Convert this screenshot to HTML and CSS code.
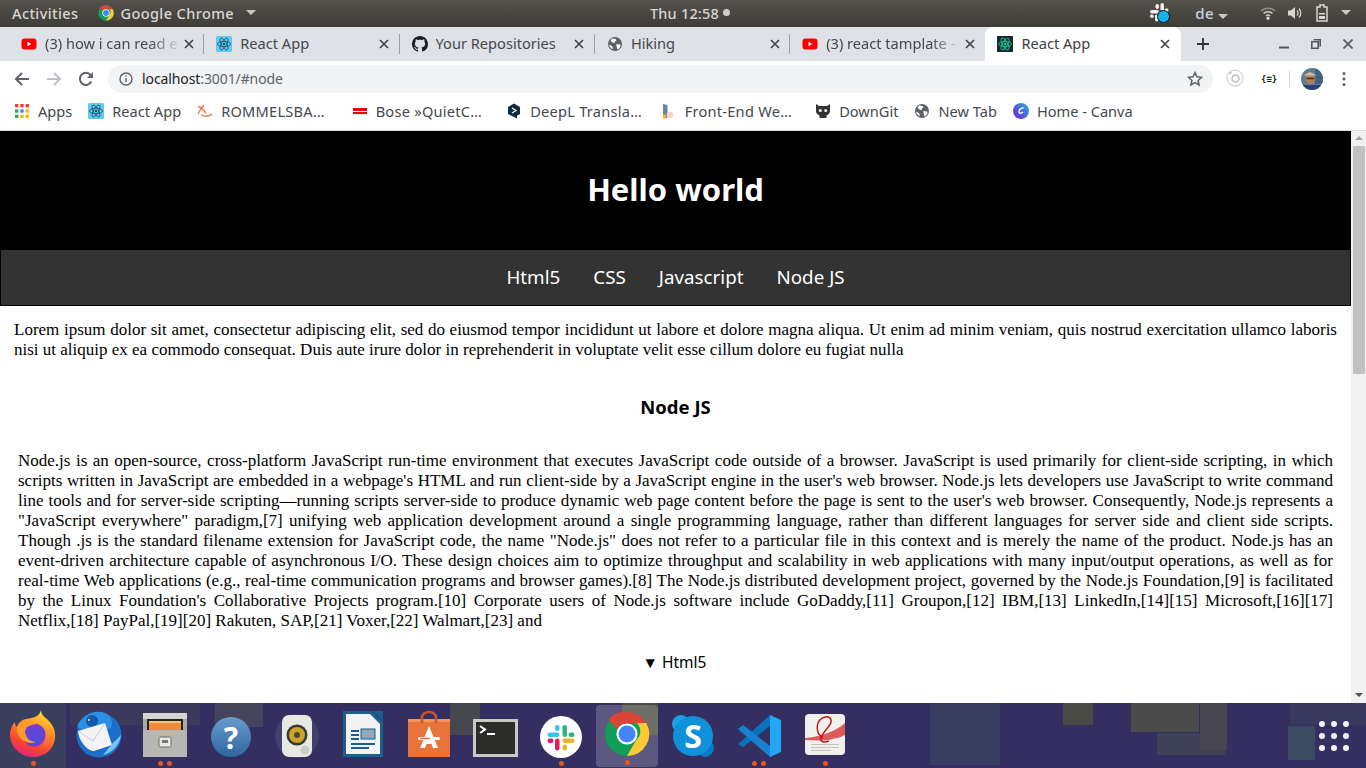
FILE: index.html
```html
<!DOCTYPE html>
<html lang="en">
<head>
<meta charset="utf-8">
<title>React App</title>
<link rel="stylesheet" href="styles.css">
</head>
<body>
<svg class="defs" width="0" height="0" aria-hidden="true">
  <defs>
    <symbol id="yt" viewBox="0 0 16 16"><rect x="0.5" y="2.5" width="15" height="11" rx="3" fill="#f00"/><path d="M6.5 5.8v4.4L10.3 8z" fill="#fff"/></symbol>
    <symbol id="react" viewBox="0 0 16 16"><rect width="16" height="16" rx="1.5" fill="#61c8ee"/><g fill="none" stroke="#1f4e66" stroke-width=".8"><ellipse cx="8" cy="8" rx="6.6" ry="2.6"/><ellipse cx="8" cy="8" rx="6.6" ry="2.6" transform="rotate(60 8 8)"/><ellipse cx="8" cy="8" rx="6.6" ry="2.6" transform="rotate(120 8 8)"/></g><circle cx="8" cy="8" r="1.3" fill="#1f4e66"/></symbol>
    <symbol id="react-dark" viewBox="0 0 16 16"><rect width="16" height="16" fill="#20232a"/><g fill="none" stroke="#10c89a" stroke-width=".9"><ellipse cx="8" cy="8" rx="6.6" ry="2.6"/><ellipse cx="8" cy="8" rx="6.6" ry="2.6" transform="rotate(60 8 8)"/><ellipse cx="8" cy="8" rx="6.6" ry="2.6" transform="rotate(120 8 8)"/></g><circle cx="8" cy="8" r="1.4" fill="#10c89a"/></symbol>
    <symbol id="gh" viewBox="0 0 16 16"><path fill="#1b1f23" d="M8 0C3.58 0 0 3.58 0 8c0 3.54 2.29 6.53 5.47 7.59.4.07.55-.17.55-.38 0-.19-.01-.82-.01-1.49-2.01.37-2.53-.49-2.69-.94-.09-.23-.48-.94-.82-1.13-.28-.15-.68-.52-.01-.53.63-.01 1.08.58 1.23.82.72 1.21 1.87.87 2.33.66.07-.52.28-.87.51-1.07-1.78-.2-3.64-.89-3.64-3.95 0-.87.31-1.59.82-2.15-.08-.2-.36-1.02.08-2.12 0 0 .67-.21 2.2.82.64-.18 1.32-.27 2-.27.68 0 1.36.09 2 .27 1.53-1.04 2.2-.82 2.2-.82.44 1.1.16 1.92.08 2.12.51.56.82 1.27.82 2.15 0 3.07-1.87 3.75-3.65 3.95.29.25.54.73.54 1.48 0 1.07-.01 1.93-.01 2.2 0 .21.15.46.55.38A8.013 8.013 0 0016 8c0-4.42-3.58-8-8-8z"/></symbol>
    <symbol id="globe" viewBox="0 0 16 16"><circle cx="8" cy="8" r="7" fill="#5f6368"/><path fill="#fff" d="M5 2.6l3.6.4.8 1.6-1.6 1-.2 1.6-2-.6L3.600 4.800zM9.400 8l3.600.4.800 1.400-1.800 3-1.600.4-.800-2.600zM2 8.400l3 1.800.800 1.800-.4 1.200A6 6 0 0 1 2 8.400z"/></symbol>
    <symbol id="x" viewBox="0 0 10 10"><path d="M1 1l8 8M9 1l-8 8" fill="none" stroke="#3c4043" stroke-width="1.6"/></symbol>
    <symbol id="chrome" viewBox="0 0 48 48"><circle cx="24" cy="24" r="23" fill="#0f9d58"/><path d="M24 1a23 23 0 0 1 20 11.500H24a11.500 11.500 0 0 0-10.500 7L5 8.500A23 23 0 0 1 24 1z" fill="#db4437"/><path d="M44 12.500A23 23 0 0 1 24 47l10-17.300a11.500 11.500 0 0 0 0-17.200z" fill="#fcc934"/><circle cx="24" cy="24" r="11" fill="#fff"/><circle cx="24" cy="24" r="8.800" fill="#4285f4"/></symbol>
    <symbol id="slack" viewBox="0 0 24 24"><g fill="#36c5f0"><rect x="3" y="9" width="8" height="3" rx="1.500"/><rect x="8" y="4" width="3" height="4" rx="1.500"/></g><g fill="#2eb67d"><rect x="13" y="4" width="3" height="8" rx="1.500"/><rect x="17" y="9" width="4" height="3" rx="1.500"/></g><g fill="#ecb22e"><rect x="13" y="13" width="8" height="3" rx="1.500"/><rect x="13" y="17" width="3" height="4" rx="1.500"/></g><g fill="#e01e5a"><rect x="8" y="13" width="3" height="8" rx="1.500"/><rect x="3" y="13" width="4" height="3" rx="1.500"/></g></symbol>
  </defs>
</svg>

<header class="topbar">
  <div class="top-left">
    <span>Activities</span>
    <span class="app-menu"><svg class="ico16"><use href="#chrome"/></svg>Google Chrome<i class="caret"></i></span>
  </div>
  <div class="clock">Thu 12:58<i class="clock-dot"></i></div>
  <div class="top-right">
    <span class="tray-slack">
      <svg viewBox="0 0 22 22" width="22" height="22"><g fill="#f2f2f2"><rect x="1" y="8" width="9" height="3.400" rx="1.700"/><rect x="6.500" y="2" width="3.400" height="5" rx="1.700"/><rect x="11.500" y="1" width="3.400" height="8" rx="1.700"/><rect x="15.500" y="6.500" width="4" height="3" rx="1.500"/><rect x="6" y="12.500" width="3.400" height="7" rx="1.700"/><rect x="1" y="12.500" width="3.700" height="3.400" rx="1.700"/></g><circle cx="14.500" cy="14.500" r="6" fill="#12b5ea" stroke="#111" stroke-width="1"/></svg>
    </span>
    <span class="tray-lang">de<i class="caret"></i></span>
    <svg class="tray-wifi" viewBox="0 0 16 16" width="16" height="16"><g fill="none" stroke="#c9c8c3" stroke-width="1.500"><path d="M1 6a10 10 0 0 1 14 0" opacity=".55"/><path d="M3.500 8.500a6.500 6.500 0 0 1 9 0"/><path d="M6 11a3 3 0 0 1 4 0"/></g><circle cx="8" cy="13.300" r="1.500" fill="#e6e5e0"/></svg>
    <svg class="tray-vol" viewBox="0 0 16 16" width="16" height="16"><path d="M1 5.500h3L8 2v12L4 10.500H1z" fill="#d8d7d2"/><g fill="none" stroke="#d8d7d2" stroke-width="1.200"><path d="M10 5.500a3.500 3.500 0 0 1 0 5"/><path d="M12 3.500a6.500 6.500 0 0 1 0 9"/></g></svg>
    <svg class="tray-bat" viewBox="0 0 14 18" width="14" height="18"><path d="M5 1h4v2h3v14H2V3h3z" fill="none" stroke="#d8d7d2" stroke-width="1.500"/><path d="M4 9h6v1.500H4zM4 12h6v3H4z" fill="#d8d7d2"/></svg>
    <i class="caret tray-caret"></i>
  </div>
</header>

<nav class="tabstrip">
  <div class="tab"><svg class="ico16"><use href="#yt"/></svg><span class="tab-title fade">(3) how i can read e</span><svg class="tab-x"><use href="#x"/></svg></div>
  <div class="tab"><svg class="ico16"><use href="#react"/></svg><span class="tab-title">React App</span><svg class="tab-x"><use href="#x"/></svg></div>
  <div class="tab"><svg class="ico16"><use href="#gh"/></svg><span class="tab-title">Your Repositories</span><svg class="tab-x"><use href="#x"/></svg></div>
  <div class="tab"><svg class="ico16"><use href="#globe"/></svg><span class="tab-title">Hiking</span><svg class="tab-x"><use href="#x"/></svg></div>
  <div class="tab tab-pre"><svg class="ico16"><use href="#yt"/></svg><span class="tab-title fade">(3) react tamplate -</span><svg class="tab-x"><use href="#x"/></svg></div>
  <div class="tab tab-active"><svg class="ico16"><use href="#react-dark"/></svg><span class="tab-title">React App</span><svg class="tab-x"><use href="#x"/></svg></div>
  <svg class="newtab" viewBox="0 0 12 12" width="12" height="12"><path d="M6 0v12M0 6h12" stroke="#2f3134" stroke-width="1.800"/></svg>
  <div class="winctl">
    <svg viewBox="0 0 10 10" width="10" height="10"><path d="M0 8.500h10" stroke="#55585c" stroke-width="2"/></svg>
    <svg viewBox="0 0 10 10" width="10" height="10"><path d="M2.500.800h6.700v6.700M.800 2.800h6.400v6.400H.800z" fill="none" stroke="#55585c" stroke-width="1.600"/></svg>
    <svg viewBox="0 0 10 10" width="10" height="10"><path d="M.500.500l9 9M9.500.500l-9 9" stroke="#55585c" stroke-width="1.700"/></svg>
  </div>
</nav>

<div class="toolbar">
  <svg class="tool" viewBox="0 0 16 16" width="16" height="16"><path d="M15 8H2M8 2L2 8l6 6" fill="none" stroke="#5f6368" stroke-width="2"/></svg>
  <svg class="tool" viewBox="0 0 16 16" width="16" height="16"><path d="M1 8h13M8 2l6 6-6 6" fill="none" stroke="#bdc1c6" stroke-width="2"/></svg>
  <svg class="tool" viewBox="0 0 16 16" width="16" height="16"><path d="M13.300 10.500A6 6 0 1 1 12.500 4L14 5.500" fill="none" stroke="#5f6368" stroke-width="2"/><path d="M15 1v6H9z" fill="#5f6368"/></svg>
  <div class="omnibox">
    <svg viewBox="0 0 14 14" width="14" height="14"><circle cx="7" cy="7" r="6" fill="none" stroke="#5f6368" stroke-width="1.400"/><path d="M7 6v4.200M7 3.600v1.200" stroke="#5f6368" stroke-width="1.400"/></svg>
    <span class="url"><b>localhost</b>:3001/#node</span>
    <svg class="star" viewBox="0 0 16 16" width="16" height="16"><path d="M8 1.500l1.900 4.300 4.700.5-3.500 3.100 1 4.600L8 11.600l-4.100 2.400 1-4.600L1.400 6.300l4.700-.5z" fill="none" stroke="#5f6368" stroke-width="1.500"/></svg>
  </div>
  <svg class="ext-a" viewBox="0 0 18 18" width="18" height="18"><circle cx="9" cy="9" r="8" fill="none" stroke="#d5d5d5" stroke-width="1.300"/><circle cx="9.500" cy="9.500" r="3.500" fill="none" stroke="#bdbdbd" stroke-width="1.500"/><circle cx="4.500" cy="4" r="1.300" fill="#c9c9c9"/></svg>
  <span class="ext-b">{≡}</span>
  <i class="tool-sep"></i>
  <svg class="avatar" viewBox="0 0 22 22" width="22" height="22"><defs><clipPath id="av"><circle cx="11" cy="11" r="11"/></clipPath></defs><g clip-path="url(#av)"><rect width="22" height="22" fill="#5d7d92"/><rect x="14" width="8" height="16" fill="#40627e"/><rect y="17" width="22" height="5" fill="#2d3f78"/><circle cx="9.500" cy="11" r="5" fill="#b47d58"/><path d="M2 7.500l7-3.500 7 3.500z" fill="#d2bd98"/><path d="M5.500 10.500h8" stroke="#333" stroke-width="1.400"/></g></svg>
  <svg class="menu-dots" viewBox="0 0 4 16" width="4" height="16"><circle cx="2" cy="2.500" r="1.600" fill="#5f6368"/><circle cx="2" cy="8" r="1.600" fill="#5f6368"/><circle cx="2" cy="13.500" r="1.600" fill="#5f6368"/></svg>
</div>

<div class="bookmarks">
  <a class="bm"><svg class="ico14" viewBox="0 0 14 14"><g><rect width="3.400" height="3.400" fill="#ea4335"/><rect x="5.300" width="3.400" height="3.400" fill="#ea4335"/><rect x="10.600" width="3.400" height="3.400" fill="#ea4335"/><rect y="5.300" width="3.400" height="3.400" fill="#34a853"/><rect x="5.300" y="5.300" width="3.400" height="3.400" fill="#4285f4"/><rect x="10.600" y="5.300" width="3.400" height="3.400" fill="#fbbc05"/><rect y="10.600" width="3.400" height="3.400" fill="#34a853"/><rect x="5.300" y="10.600" width="3.400" height="3.400" fill="#fbbc05"/><rect x="10.600" y="10.600" width="3.400" height="3.400" fill="#fbbc05"/></g></svg>Apps</a>
  <a class="bm"><svg class="ico16"><use href="#react"/></svg>React App</a>
  <a class="bm bm-long"><svg class="ico16" viewBox="0 0 16 16"><g fill="none" stroke="#f0743e" stroke-width="1.300"><path d="M1 3.500c3 .5 6 3.500 8 7"/><path d="M1 11c2-4 4-7 6-9"/><path d="M4 12c4 2 9 1 11-1"/></g></svg>ROMMELSBA…</a>
  <a class="bm bm-long"><svg class="ico16" viewBox="0 0 16 16"><rect x="1" y="5" width="14" height="6" fill="#e3000f"/><rect x="1" y="8" width="14" height="1" fill="#fff"/><rect x="1" y="11" width="14" height="2" fill="#eee"/></svg>Bose »QuietC…</a>
  <a class="bm bm-long"><svg class="ico16" viewBox="0 0 16 16"><path d="M8 .500l6 3.500v7l-3 1.800v2.700l-3-1.600-6-2.900V4z" fill="#0f2b46"/><path d="M6 5l4 2.500L6 10" fill="none" stroke="#fff" stroke-width="1.200"/></svg>DeepL Transla…</a>
  <a class="bm bm-long"><svg class="ico16" viewBox="0 0 16 16"><path d="M2 1l4.500 1v13H2z" fill="#6b83a8"/><path d="M2 11l3 1v3.500H2z" fill="#f5b325"/><circle cx="9" cy="12" r="3.300" fill="#fbd3bf"/></svg>Front-End We…</a>
  <a class="bm"><svg class="ico16" viewBox="0 0 16 16"><path d="M1 1l3 2h8l3-2v7c0 2.500-2 4-3.500 4.300V15h-7v-2.700C3 12 1 10.500 1 8z" fill="#333"/><circle cx="5.300" cy="7.500" r="1.500" fill="#fff"/><circle cx="10.700" cy="7.500" r="1.500" fill="#fff"/></svg>DownGit</a>
  <a class="bm"><svg class="ico16"><use href="#globe"/></svg>New Tab</a>
  <a class="bm"><svg class="ico16" viewBox="0 0 16 16"><defs><linearGradient id="cv" x1="0" y1="1" x2="1" y2="0"><stop offset="0" stop-color="#7a16d8"/><stop offset="1" stop-color="#25b5d8"/></linearGradient></defs><circle cx="8" cy="8" r="8" fill="url(#cv)"/><path d="M10.500 5.500C9.500 4 6.500 5.500 6 8.500c-.3 2 2 2.500 4 .5" fill="none" stroke="#fff" stroke-width="1.400"/></svg>Home - Canva</a>
</div>

<div class="viewport">
  <main class="page">
    <header class="hero"><h1>Hello world</h1></header>
    <nav class="site-nav"><a>Html5</a><a>CSS</a><a>Javascript</a><a>Node JS</a></nav>
    <p class="intro">Lorem ipsum dolor sit amet, consectetur adipiscing elit, sed do eiusmod tempor incididunt ut labore et dolore magna aliqua. Ut enim ad minim veniam, quis nostrud exercitation ullamco laboris nisi ut aliquip ex ea commodo consequat. Duis aute irure dolor in reprehenderit in voluptate velit esse cillum dolore eu fugiat nulla</p>
    <section class="article">
      <h2>Node JS</h2>
      <p>Node.js is an open-source, cross-platform JavaScript run-time environment that executes JavaScript code outside of a browser. JavaScript is used primarily for client-side scripting, in which scripts written in JavaScript are embedded in a webpage's HTML and run client-side by a JavaScript engine in the user's web browser. Node.js lets developers use JavaScript to write command line tools and for server-side scripting—running scripts server-side to produce dynamic web page content before the page is sent to the user's web browser. Consequently, Node.js represents a "JavaScript everywhere" paradigm,[7] unifying web application development around a single programming language, rather than different languages for server side and client side scripts. Though .js is the standard filename extension for JavaScript code, the name "Node.js" does not refer to a particular file in this context and is merely the name of the product. Node.js has an event-driven architecture capable of asynchronous I/O. These design choices aim to optimize throughput and scalability in web applications with many input/output operations, as well as for real-time Web applications (e.g., real-time communication programs and browser games).[8] The Node.js distributed development project, governed by the Node.js Foundation,[9] is facilitated by the Linux Foundation's Collaborative Projects program.[10] Corporate users of Node.js software include GoDaddy,[11] Groupon,[12] IBM,[13] LinkedIn,[14][15] Microsoft,[16][17] Netflix,[18] PayPal,[19][20] Rakuten, SAP,[21] Voxer,[22] Walmart,[23] and</p>
    </section>
    <div class="disclosure">▼ Html5</div>
  </main>
  <aside class="scrollbar">
    <i class="sb-up"></i>
    <div class="sb-track"><div class="sb-thumb"></div></div>
    <i class="sb-down"></i>
  </aside>
</div>

<footer class="dock">
  <div class="dock-item"><svg viewBox="0 0 48 48" width="48" height="48"><defs><linearGradient id="ff" x1=".7" y1="0" x2=".3" y2="1"><stop offset="0" stop-color="#ffe12e"/><stop offset=".4" stop-color="#ff8a2a"/><stop offset=".75" stop-color="#f8442f"/><stop offset="1" stop-color="#e3208a"/></linearGradient></defs><path d="M32 0c0 4 3 7 7 10 5 5 8 11 7 18-1 11-10 19-22 19C12 47 2 38 1 26c0-6 2-11 5-14 0 2 .5 4 2 5 1-4 4-7 9-8 3-.5 8-1 11-3 2-1.500 3.500-3.500 4-6z" fill="url(#ff)"/><circle cx="25" cy="25" r="11.500" fill="#6d3fd4"/><circle cx="26" cy="27" r="7" fill="#5b4ad8"/><path d="M8 17c5-6 15-7 21-3-4 0-8 1-11 3-1 2-3 4-1 8 1 4 5 7 10 7-8 3-16-2-18-8-1-2-1-5-1-7z" fill="#ff9a2e"/></svg><span class="pips"><i></i></span></div>
  <div class="dock-item"><svg viewBox="0 0 48 48" width="48" height="48"><circle cx="24" cy="25" r="22.500" fill="#1a6fc9"/><path d="M2 17C6 5 20-1 30 3c7 3 8 10 6 15-9 5-24 5-34-1z" fill="#2a8fe6"/><circle cx="17" cy="11" r="6" fill="#125aa8"/><circle cx="14" cy="10" r=".9" fill="#fff"/><path d="M3 21l27-8 7 22-18 6c-7 0-15-10-16-20z" fill="#f4f4f6"/><path d="M3 21l15 10 12-18" fill="none" stroke="#c8c8d0" stroke-width="1"/><path d="M28 45c9-2 17-10 18-20l-9 9z" fill="#7ec1f2"/></svg><span class="pips"></span></div>
  <div class="dock-item dock-low"><svg viewBox="0 0 48 48" width="48" height="48"><rect x="2" y="2" width="44" height="44" rx="2" fill="#a9a9a5"/><rect x="2" y="2" width="44" height="6" fill="#d5d5d2"/><rect x="6" y="8" width="36" height="11" fill="#222"/><rect x="8" y="10" width="32" height="9" fill="#f08a3c"/><rect x="8" y="10" width="32" height="2" fill="#f8c27a"/><rect x="2" y="19" width="44" height="27" fill="#b6b6b2"/><rect x="18" y="26" width="12" height="10" rx="1.500" fill="#e8e8e4" stroke="#6a6a68"/><rect x="21" y="29" width="6" height="3" fill="#77777a"/></svg><span class="pips"><i></i><i></i></span></div>
  <div class="dock-item"><svg viewBox="0 0 48 48" width="48" height="48"><defs><linearGradient id="hp" x1="0" y1="0" x2="0" y2="1"><stop offset="0" stop-color="#6a9ccc"/><stop offset="1" stop-color="#2c66a0"/></linearGradient></defs><circle cx="24" cy="27" r="20" fill="url(#hp)"/><text x="24" y="39" text-anchor="middle" class="help-q">?</text></svg><span class="pips"></span></div>
  <div class="dock-item"><svg viewBox="0 0 48 48" width="48" height="48"><circle cx="24" cy="26" r="22" fill="#6f7f9a" opacity=".22"/><rect x="9" y="5" width="30" height="42" rx="7" fill="#e8e8e2"/><circle cx="24" cy="25" r="10.500" fill="#3a3a35"/><circle cx="24" cy="25" r="8" fill="#caa52a"/><circle cx="24" cy="25" r="3" fill="#4a4a30"/><circle cx="32" cy="40" r="4.500" fill="#cdcdc8"/></svg><span class="pips"></span></div>
  <div class="dock-item"><svg viewBox="0 0 48 48" width="48" height="48"><path d="M4 1h29l11 11v35H4z" fill="#1b5f8f"/><path d="M7 4h24l10 10v30H7z" fill="#f2f3f2"/><path d="M34 1h10v10z" fill="#1b5f8f"/><g fill="#1b5f8f"><rect x="12" y="20" width="8" height="2"/><rect x="12" y="24" width="8" height="2"/><rect x="12" y="28" width="8" height="2"/><rect x="12" y="33" width="24" height="2"/><rect x="12" y="37" width="18" height="2"/></g><rect x="22" y="19" width="14" height="10" fill="#8fa8b8" stroke="#1b5f8f"/></svg><span class="pips"></span></div>
  <div class="dock-item"><svg viewBox="0 0 48 48" width="48" height="48"><path d="M3 9h42v38H3z" fill="#e8743b"/><path d="M3 9h42v3H3z" fill="#f59358"/><path d="M17 13V7a7 5 0 0 1 14 0v6" fill="none" stroke="#c7562a" stroke-width="2.500"/><path d="M24 16L15 38h5l1.500-4h5l1.500 4h5z" fill="#fff"/><rect x="13" y="27" width="22" height="3" rx="1.500" fill="#fff"/><rect x="15" y="27.700" width="10" height="1.600" fill="#e8743b"/></svg><span class="pips"></span></div>
  <div class="dock-item"><svg viewBox="0 0 48 48" width="48" height="48"><rect x="2" y="9" width="45" height="38" fill="#c9c9c4"/><rect x="5" y="12" width="39" height="32" fill="#2b2b2a"/><path d="M9 16l5 3.500-5 3.500" fill="none" stroke="#fff" stroke-width="2"/><rect x="16" y="23" width="8" height="2" fill="#fff"/></svg><span class="pips"></span></div>
  <div class="dock-item"><svg viewBox="0 0 48 48" width="48" height="48"><circle cx="24" cy="27" r="21" fill="#fff"/><svg x="6" y="9" width="36" height="36" viewBox="0 0 24 24"><use href="#slack"/></svg></svg><span class="pips"><i></i></span></div>
  <div class="dock-item dock-active"><svg width="46" height="46"><use href="#chrome"/></svg><span class="pips"><i></i></span></div>
  <div class="dock-item"><svg viewBox="0 0 48 48" width="48" height="48"><circle cx="12" cy="14" r="9" fill="#1ca0e6"/><circle cx="36" cy="38" r="9" fill="#0a78c2"/><circle cx="24" cy="26" r="20" fill="#0f92da"/><text x="24" y="38" text-anchor="middle" class="skype-s">S</text></svg><span class="pips"></span></div>
  <div class="dock-item"><svg viewBox="0 0 48 48" width="48" height="48"><path d="M35 5v11L8 37l-5-3 9-8 23-21z" fill="#0a72b8"/><path d="M35 47V36L8 15l-5 4 32 28z" fill="#1782cf"/><path d="M35 5l11 5v32l-11 5z" fill="#23a7f2"/></svg><span class="pips"><i></i><i></i></span></div>
  <div class="dock-item"><svg viewBox="0 0 48 48" width="48" height="48"><rect x="4" y="4" width="40" height="41" rx="4" fill="#f1f0ec"/><path d="M4 28c14-1 30-6 40-15v12C32 31 18 31 4 30z" fill="#dc5a5a"/><path d="M22 28C14 23 14 10 24 7c6-1 8 4 4 9-3 4-7 8-8 12s3 5 8 3" fill="none" stroke="#c4161c" stroke-width="1.500"/><g fill="#c2c2be"><rect x="10" y="34" width="28" height="1"/><rect x="10" y="37" width="28" height="1"/><rect x="10" y="40" width="20" height="1"/></g></svg><span class="pips"><i></i></span></div>
  <div class="dock-grid"><i></i><i></i><i></i><i></i><i></i><i></i><i></i><i></i><i></i></div>
</footer>
</body>
</html>
```
FILE: styles.css
```css
* { box-sizing: border-box; }
html, body { margin: 0; height: 768px; overflow: hidden; }
body { display: flex; flex-direction: column; width: 1366px; background: #fff; font-family: "Noto Sans", sans-serif; }
.defs { position: absolute; }
.ico16 { width: 16px; height: 16px; flex: none; }
.ico14 { width: 14px; height: 14px; flex: none; }

/* GNOME top bar */
.topbar { height: 27px; flex: none; display: grid; grid-template-columns: 1fr auto 1fr; align-items: center; padding: 0 15px 2px 12px; background: linear-gradient(#55524b, #3e3c37); color: #d8d7d1; font-size: 14.5px; font-weight: 500; letter-spacing: .4px; }
.top-left { display: flex; align-items: center; gap: 20px; }
.app-menu { display: flex; align-items: center; gap: 6px; }
.caret { display: inline-block; width: 0; height: 0; border: 5px solid transparent; border-top-color: #c9c8c2; border-bottom: 0; margin-left: 6px; }
.clock { display: flex; align-items: center; margin-left: 17px; letter-spacing: .2px; }
.clock-dot { width: 7px; height: 7px; border-radius: 50%; background: #ccc; margin-left: 4px; }
.top-right { display: flex; align-items: center; justify-content: flex-end; }
.tray-slack { display: flex; margin-right: 24px; }
.tray-lang { margin-right: 32px; font-size: 15px; color: #c8d3dd; }
.tray-lang .caret { margin-left: 4px; }
.tray-wifi { margin-right: 11px; }
.tray-vol { margin-right: 12px; }
.tray-bat { margin-right: 12px; }
.tray-caret { margin-left: 0; }

/* Tabs */
.tabstrip { height: 34px; flex: none; display: flex; align-items: center; padding-left: 9px; background: #dee1e6; color: #45484c; font-size: 14.6px; }
.tab { width: 195.3px; height: 34px; flex: none; display: flex; align-items: center; padding: 0 9.500px 0 12px; position: relative; }
.tab::after { content: ""; position: absolute; right: 0; top: 7px; height: 20px; width: 1px; background: #9da0a5; }
.tab-pre::after, .tab-active::after { display: none; }
.tab-active { background: #fff; border-radius: 8px 8px 0 0; color: #3c4043; }
.tab-title { flex: 1; margin: -3px 0 0 8px; white-space: nowrap; overflow: hidden; }
.fade { -webkit-mask-image: linear-gradient(90deg, #000 75%, transparent 98%); mask-image: linear-gradient(90deg, #000 75%, transparent 98%); }
.tab-x { width: 10px; height: 10px; flex: none; margin-right: 1px; }
.newtab { margin-left: 16px; flex: none; }
.winctl { display: flex; gap: 22px; margin-left: auto; margin-right: 13px; align-items: center; }

/* Toolbar */
.toolbar { height: 32px; flex: none; display: flex; align-items: flex-end; background: #fff; padding-left: 14px; }
.toolbar > svg, .toolbar > span, .toolbar > i { margin-bottom: 6px; flex: none; }
.tool { margin-right: 16px; }
.omnibox { width: 1105px; height: 28px; margin-left: -2px; flex: none; display: flex; align-items: center; border-radius: 14px; background: #f1f3f4; padding: 0 10px 0 11px; color: #5f6368; font-size: 14px; }
.url { margin: -2px 0 0 9px; flex: 1; letter-spacing: -.1px; }
.url b { font-weight: 400; color: #202124; }
.ext-a { margin-left: 13px; }
.ext-b { margin-left: 17px; width: 14px; font: 700 9px "DejaVu Sans Mono", monospace; color: #222; white-space: nowrap; line-height: 16px; }
.tool-sep { width: 1px; height: 16px; background: #d5d7da; margin-left: 14px; }
.avatar { margin-left: 11px; margin-bottom: 3px !important; }
.menu-dots { margin-left: 19px; }

/* Bookmarks */
.bookmarks { height: 38px; flex: none; display: flex; align-items: center; padding: 0 0 1px 15px; background: #fff; border-bottom: 1px solid #dadce0; color: #45484c; font-size: 14.6px; }
.bm { display: flex; align-items: center; gap: 8px; margin-right: 16px; white-space: nowrap; }
.bm:first-child { gap: 9px; }
.bm-long { width: 138.5px; flex: none; letter-spacing: .25px; }

/* Page */
.viewport { flex: 1; min-height: 0; display: flex; overflow: hidden; }
.page { flex: 1; min-width: 0; overflow: hidden; color: #000; font-family: "Liberation Serif", serif; font-size: 17px; line-height: 20px; }
.hero { height: 119px; background: #000; display: flex; align-items: center; justify-content: center; }
.hero h1 { margin: 0 0 4px; font: 700 31px "Noto Sans", sans-serif; color: #fff; }
.site-nav { height: 56px; display: flex; justify-content: center; align-items: center; gap: 33px; background: #333; border: 1px solid #000; border-top: 0; }
.site-nav a { color: #fff; font: 400 18.800px "Noto Sans", sans-serif; margin-top: -2px; }
.intro { margin: 14px 14px 0; text-align: justify; }
.article { margin: 36px 18px 0; }
.article h2 { margin: 0; font: 700 18.500px/22px "Noto Sans", sans-serif; text-align: center; }
.article p { margin: 33px 0 0; text-align: justify; }
.disclosure { margin-top: 21px; padding-right: 2px; text-align: center; font: 400 15.500px/20px "Noto Sans", sans-serif; }

/* Scrollbar */
.scrollbar { width: 15px; flex: none; display: flex; flex-direction: column; background: #f1f1f1; }
.sb-up { height: 0; width: 0; margin: 5px auto 6px; border: 4px solid transparent; border-bottom-color: #a3a3a3; border-top: 0; }
.sb-track { flex: 1; padding: 0 1px 0 2px; }
.sb-thumb { height: 228px; background: #c1c1c1; }
.sb-down { height: 0; width: 0; margin: 4px auto 6px; border: 4px solid transparent; border-top-color: #505050; border-bottom: 0; }

/* Dock */
.dock { height: 65px; flex: none; display: flex; background-color: #352f61;
  background-image:
    linear-gradient(#4c4b4c, #4c4b4c), linear-gradient(#47454f, #47454f), linear-gradient(#3f4158, #3f4158), linear-gradient(#4a4a44, #4a4a44), linear-gradient(#4a4a44, #4a4a44), linear-gradient(#46464f, #46464f), linear-gradient(#383e5f, #383e5f), linear-gradient(#3a4a60, #3a4a60), linear-gradient(#39395f, #39395f), linear-gradient(#3a3f5e, #3a3f5e), linear-gradient(#3b3a5c, #3b3a5c), linear-gradient(#45445a, #45445a);
  background-size: 68px 29px, 27px 47px, 68px 22px, 30px 22px, 36px 32px, 30px 32px, 70px 62px, 27px 34px, 76px 22px, 66px 65px, 130px 22px, 48px 24px;
  background-position: 1131px 0, 1200px 0, 1157px 30px, 1063px 0, 622px 0, 450px 0, 930px 0, 1288px 23px, 1290px 0, 0 0, 70px 0, 215px 0;
  background-repeat: no-repeat; }
.dock-item { width: 66px; flex: none; display: flex; flex-direction: column; align-items: center; justify-content: flex-end; height: 65px; }
.dock-item > svg { flex: none; margin-bottom: 3px; }
.dock-low > svg { margin-bottom: 2px; }
.dock-active { background: rgba(255,255,255,.2); border-radius: 4px; margin: 2px 2px 1px; width: 62px; height: 62px; }
.pips { display: flex; justify-content: center; gap: 4px; height: 5px; margin-bottom: 2px; }
.pips i { width: 5px; height: 5px; border-radius: 50%; background: #e95420; }
.dock-grid { margin: 18px 17px 0 auto; width: 30px; height: 30px; display: grid; grid-template-columns: repeat(3, 6px); justify-content: space-between; align-content: space-between; }
.dock-grid i { width: 6px; height: 6px; border-radius: 50%; background: #f2f2f6; }
.help-q { font: 700 30px "Noto Sans", sans-serif; fill: #fff; }
.skype-s { font: 700 32px "Noto Sans", sans-serif; fill: #fff; }
```
